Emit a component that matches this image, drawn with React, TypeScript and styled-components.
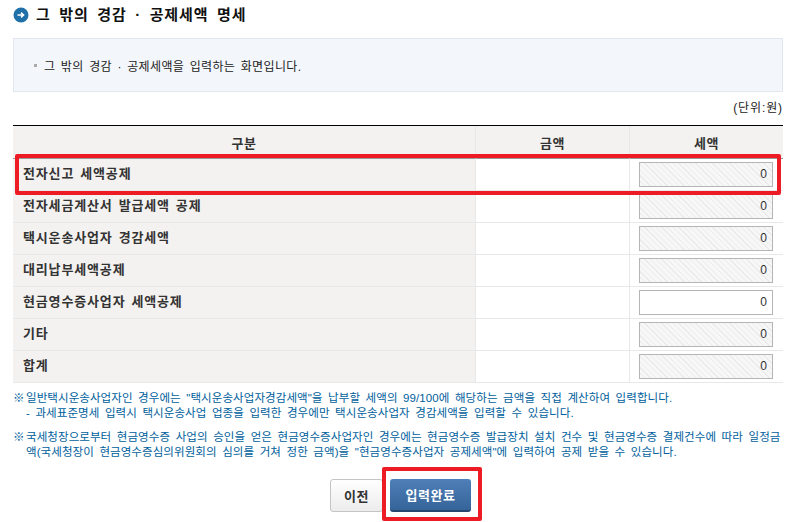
import React from 'react';
import styled, { createGlobalStyle } from 'styled-components';

const GlobalStyle = createGlobalStyle`
  html, body {
    margin: 0;
    padding: 0;
    background: #fff;
    font-family: "Liberation Sans", "Noto Sans CJK KR", sans-serif;
    font-size: 12px;
    color: #222;
  }
`;

const Page = styled.div`
  position: relative;
  width: 796px;
  height: 522px;
  overflow: hidden;
  box-sizing: border-box;
  padding: 0 13px;
`;

const TitleRow = styled.div`
  display: flex;
  align-items: center;
  gap: 7px;
  height: 30px;
  margin-bottom: 8px;
`;

const Title = styled.h2`
  margin: 0;
  font-size: 15px;
  font-weight: 700;
  color: #111;
  letter-spacing: 0.9px;
  word-spacing: 3.5px;
  line-height: 30px;
`;

const InfoBox = styled.div`
  box-sizing: border-box;
  height: 54px;
  background: #f3f6fb;
  border: 1px solid #e1e6ef;
  display: flex;
  align-items: center;
  padding-left: 20px;
  gap: 7px;
  font-size: 12px;
  color: #222;
  letter-spacing: 0.35px;
  word-spacing: 1.8px;
`;

const Bullet = styled.span`
  width: 3px;
  height: 3px;
  background: #aaa;
`;

const Unit = styled.div`
  height: 33px;
  line-height: 33px;
  text-align: right;
  font-size: 12px;
  color: #222;
  letter-spacing: 0.9px;
`;

const Table = styled.div`
  border-top: 1px solid #000;
  display: grid;
  grid-template-columns: 463px 154px 153px;
`;

const HeadCell = styled.div<{ $last?: boolean }>`
  box-sizing: border-box;
  height: 33px;
  background: #f3f2f0;
  border-right: ${p => (p.$last ? 'none' : '1px solid #e8e8e8')};
  border-bottom: 1px solid #999;
  display: flex;
  align-items: center;
  justify-content: center;
  font-weight: 700;
  color: #333;
  font-size: 13px;
  letter-spacing: 0.5px;
`;

const LabelCell = styled.div`
  box-sizing: border-box;
  height: 32px;
  background: #f3f2f0;
  border-right: 1px solid #e8e8e8;
  border-bottom: 1px solid #e8e8e8;
  display: flex;
  align-items: center;
  padding: 0 0 4px 10px;
  font-weight: 700;
  color: #333;
  font-size: 13px;
  letter-spacing: 0.85px;
  word-spacing: 1.5px;
`;

const EmptyCell = styled.div`
  box-sizing: border-box;
  height: 32px;
  border-right: 1px solid #e8e8e8;
  border-bottom: 1px solid #e8e8e8;
`;

const InputCell = styled.div`
  box-sizing: border-box;
  height: 32px;
  border-bottom: 1px solid #e8e8e8;
  padding: 3px 10px 0 9px;
`;

const Amount = styled.div<{ $editable?: boolean }>`
  box-sizing: border-box;
  width: 134px;
  height: 25px;
  border: 1px solid #b5b5b5;
  background: ${p =>
    p.$editable
      ? '#fff'
      : 'repeating-linear-gradient(45deg, #f7f7f7 0, #f7f7f7 3px, #ebebeb 3px, #ebebeb 4px)'};
  text-align: right;
  line-height: 22px;
  padding-right: 5px;
  font-size: 12px;
  color: #333;
`;

const Notes = styled.div`
  margin-top: 8px;
  color: #00609c;
  font-size: 11.5px;
  line-height: 15px;
  letter-spacing: 0.08px;
  word-spacing: 2.25px;
`;

const Note = styled.div`
  display: flex;
  margin-bottom: 9px;
`;

const NoteMark = styled.span`
  flex: 0 0 13px;
`;

const NoteBody = styled.div`
  flex: 1;
  white-space: nowrap;
`;

const Buttons = styled.div`
  position: absolute;
  top: 479px;
  left: 330px;
  display: flex;
  gap: 7px;
`;

const PrevButton = styled.button`
  box-sizing: border-box;
  width: 53px;
  height: 33px;
  border: 1px solid #c4c4c4;
  border-radius: 3px;
  background: linear-gradient(#ffffff, #ececec);
  color: #333;
  font: 700 13px "Noto Sans CJK KR", sans-serif;
  letter-spacing: 0.5px;
`;

const DoneButton = styled.button`
  box-sizing: border-box;
  width: 81px;
  height: 33px;
  border: none;
  border-bottom: 2px solid #24466f;
  border-radius: 3px;
  background: linear-gradient(#4f7fb8, #356499);
  color: #fff;
  font: 700 13px "Noto Sans CJK KR", sans-serif;
  letter-spacing: 0.6px;
`;

const Highlight = styled.div<{ $x: number; $y: number; $w: number; $h: number }>`
  position: absolute;
  left: ${p => p.$x}px;
  top: ${p => p.$y}px;
  width: ${p => p.$w}px;
  height: ${p => p.$h}px;
  box-sizing: border-box;
  border: 4px solid #ed1c24;
  border-radius: 2px;
  pointer-events: none;
`;

const rows = [
  { label: '전자신고 세액공제' },
  { label: '전자세금계산서 발급세액 공제' },
  { label: '택시운송사업자 경감세액' },
  { label: '대리납부세액공제' },
  { label: '현금영수증사업자 세액공제', editable: true },
  { label: '기타' },
  { label: '합계' },
];

export default function App() {
  return (
    <Page>
      <GlobalStyle />
      <TitleRow>
        <svg width="16" height="16" viewBox="0 0 16 16">
          <circle cx="8" cy="8" r="7.5" fill="#1f6fa8" />
          <path d="M4.5 8h6M8 5.6 10.6 8 8 10.4" stroke="#fff" strokeWidth="1.5" fill="none" />
        </svg>
        <Title>그 밖의 경감 · 공제세액 명세</Title>
      </TitleRow>
      <InfoBox>
        <Bullet />
        그 밖의 경감 · 공제세액을 입력하는 화면입니다.
      </InfoBox>
      <Unit>(단위:원)</Unit>
      <Table>
        <HeadCell>구분</HeadCell>
        <HeadCell>금액</HeadCell>
        <HeadCell $last>세액</HeadCell>
        {rows.map(row => (
          <React.Fragment key={row.label}>
            <LabelCell>{row.label}</LabelCell>
            <EmptyCell />
            <InputCell>
              <Amount $editable={row.editable}>0</Amount>
            </InputCell>
          </React.Fragment>
        ))}
      </Table>
      <Notes>
        <Note>
          <NoteMark>※</NoteMark>
          <NoteBody>
            일반택시운송사업자인 경우에는 "택시운송사업자경감세액"을 납부할 세액의 99/100에 해당하는 금액을 직접 계산하여 입력합니다.
            <br />- 과세표준명세 입력시 택시운송사업 업종을 입력한 경우에만 택시운송사업자 경감세액을 입력할 수 있습니다.
          </NoteBody>
        </Note>
        <Note>
          <NoteMark>※</NoteMark>
          <NoteBody>
            국세청장으로부터 현금영수증 사업의 승인을 얻은 현금영수증사업자인 경우에는 현금영수증 발급장치 설치 건수 및 현금영수증 결제건수에 따라 일정금
            <br />액(국세청장이 현금영수증심의위원회의 심의를 거쳐 정한 금액)을 "현금영수증사업자 공제세액"에 입력하여 공제 받을 수 있습니다.
          </NoteBody>
        </Note>
      </Notes>
      <Buttons>
        <PrevButton>이전</PrevButton>
        <DoneButton>입력완료</DoneButton>
      </Buttons>
      <Highlight $x={15} $y={154} $w={766} $h={41} />
      <Highlight $x={382} $y={467} $w={100} $h={54} />
    </Page>
  );
}
